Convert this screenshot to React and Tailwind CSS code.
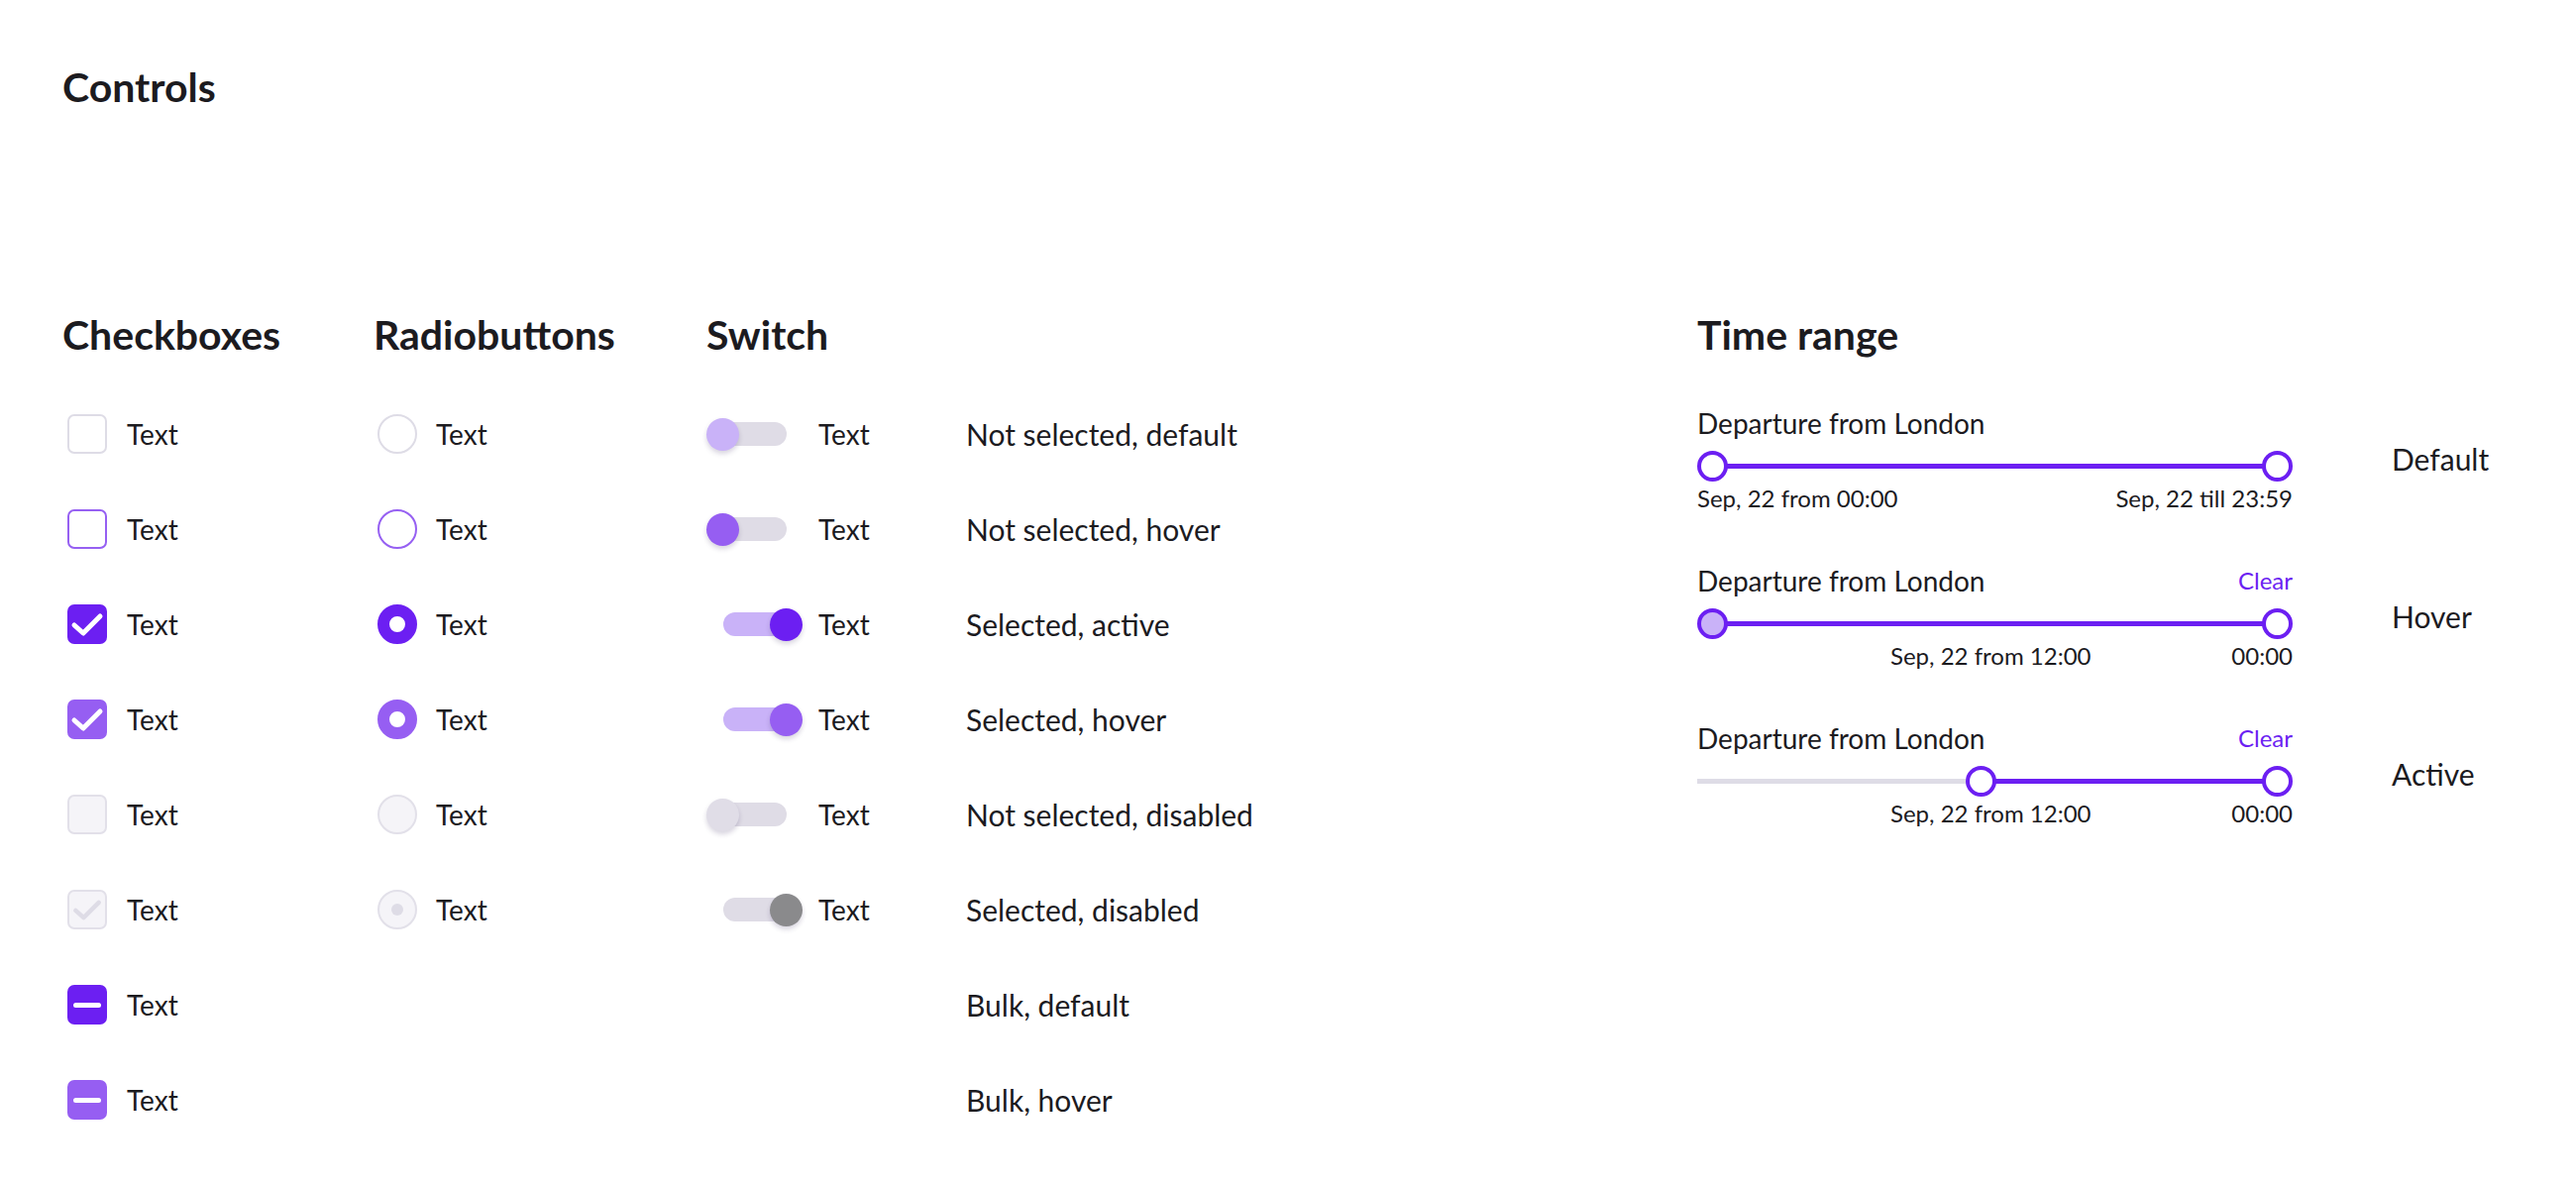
import React from 'react'

const ink = 'text-[#1c1b1f]'
const font = { fontFamily: 'Lato, "Noto Sans", sans-serif' }

function Check({ color }) {
  return (
    <svg width="40" height="40" viewBox="0 0 40 40">
      <polyline points="7,21 16,29 33,12" fill="none" stroke={color} strokeWidth="5" strokeLinecap="round" strokeLinejoin="round" />
    </svg>
  )
}

function Checkbox({ variant }) {
  if (variant === 'default') return <div className="w-10 h-10 rounded-[7px] border-2 border-[#dedce6] bg-white" />
  if (variant === 'hover') return <div className="w-10 h-10 rounded-[7px] border-2 border-[#9660f2] bg-white" />
  if (variant === 'checked') return <div className="w-10 h-10 rounded-[7px] bg-[#6c1ff2]"><Check color="#fff" /></div>
  if (variant === 'checkedHover') return <div className="w-10 h-10 rounded-[7px] bg-[#965ef2]"><Check color="#fff" /></div>
  if (variant === 'disabled') return <div className="w-10 h-10 rounded-[7px] border-2 border-[#e2e0e9] bg-[#f5f4f8]" />
  if (variant === 'checkedDisabled')
    return (
      <div className="w-10 h-10 rounded-[7px] border-2 border-[#e2e0e9] bg-[#f5f4f8] flex items-center justify-center">
        <svg width="36" height="36" viewBox="0 0 40 40">
          <polyline points="7,21 16,29 33,12" fill="none" stroke="#dedce6" strokeWidth="5" strokeLinecap="round" strokeLinejoin="round" />
        </svg>
      </div>
    )
  if (variant === 'bulk')
    return (
      <div className="w-10 h-10 rounded-[7px] bg-[#6c1ff2] flex items-center justify-center">
        <div className="w-[28px] h-[5px] rounded-full bg-white" />
      </div>
    )
  return (
    <div className="w-10 h-10 rounded-[7px] bg-[#965ef2] flex items-center justify-center">
      <div className="w-[28px] h-[5px] rounded-full bg-white" />
    </div>
  )
}

function Radio({ variant }) {
  if (variant === 'default') return <div className="w-10 h-10 rounded-full border-2 border-[#dedce6] bg-white" />
  if (variant === 'hover') return <div className="w-10 h-10 rounded-full border-2 border-[#9660f2] bg-white" />
  if (variant === 'checked') return <div className="w-10 h-10 rounded-full border-[12px] border-[#6c1ff2] bg-white" />
  if (variant === 'checkedHover') return <div className="w-10 h-10 rounded-full border-[12px] border-[#965ef2] bg-white" />
  if (variant === 'disabled') return <div className="w-10 h-10 rounded-full border-2 border-[#e2e0e9] bg-[#f5f4f8]" />
  return (
    <div className="w-10 h-10 rounded-full border-2 border-[#e2e0e9] bg-[#f5f4f8] flex items-center justify-center">
      <div className="w-3 h-3 rounded-full bg-[#dedce6]" />
    </div>
  )
}

function Switch({ on, track, knob }) {
  return (
    <div className="relative w-[97px] h-[34px] flex items-center">
      <div className={`h-[24px] w-[72px] rounded-full ${track} ${on ? 'ml-[17px]' : 'ml-[9px]'}`} />
      <div
        className={`absolute top-[1px] w-[33px] h-[33px] rounded-full shadow-[0_3px_5px_rgba(40,20,80,0.18)] ${knob} ${on ? 'left-[64px]' : 'left-0'}`}
      />
    </div>
  )
}

const checkboxes = ['default', 'hover', 'checked', 'checkedHover', 'disabled', 'checkedDisabled', 'bulk', 'bulkHover']
const radios = ['default', 'hover', 'checked', 'checkedHover', 'disabled', 'checkedDisabled']
const switches = [
  { on: false, track: 'bg-[#dfdce6]', knob: 'bg-[#c9b2f8]' },
  { on: false, track: 'bg-[#dfdce6]', knob: 'bg-[#965ef2]' },
  { on: true, track: 'bg-[#c9b2f8]', knob: 'bg-[#6c1ff2]' },
  { on: true, track: 'bg-[#c9b2f8]', knob: 'bg-[#965ef2]' },
  { on: false, track: 'bg-[#dfdce6]', knob: 'bg-[#e0dde7]' },
  { on: true, track: 'bg-[#dfdce6]', knob: 'bg-[#8a8a8c]' },
]
const states = [
  'Not selected, default',
  'Not selected, hover',
  'Selected, active',
  'Selected, hover',
  'Not selected, disabled',
  'Selected, disabled',
  'Bulk, default',
  'Bulk, hover',
]

function Heading({ children }) {
  return <h2 className={`h-[40px] mb-[32px] flex items-center text-[41px] font-bold ${ink}`}>{children}</h2>
}

function Row({ children, className = '' }) {
  return <div className={`h-[96px] flex items-center ${className}`}>{children}</div>
}

function Handle({ left, fill = 'bg-white' }) {
  return (
    <div
      className={`absolute top-[1px] w-[31px] h-[31px] rounded-full border-[4px] border-[#6c1ff2] ${fill}`}
      style={left === 'end' ? { right: 0 } : { left }}
    />
  )
}

function TimeRange({ mode, label }) {
  return (
    <div className="flex">
      <div className="w-[601px]">
        <div className="h-[30px] flex items-center justify-between">
          <span className={`text-[28px] ${ink}`}>Departure from London</span>
          {mode !== 'default' && <span className="text-[24px] text-[#6c1ff2]">Clear</span>}
        </div>
        <div className="relative h-[32px] mt-[12px]">
          {mode === 'active' ? (
            <>
              <div className="absolute left-0 w-[272px] top-[14px] h-[5px] bg-[#dedce6]" />
              <div className="absolute left-[286px] right-[15px] top-[14px] h-[5px] bg-[#6c1ff2]" />
              <Handle left={271} />
              <Handle left="end" />
            </>
          ) : (
            <>
              <div className="absolute left-[15px] right-[15px] top-[14px] h-[5px] bg-[#6c1ff2]" />
              <Handle left={0} fill={mode === 'hover' ? 'bg-[#c9b2f8]' : 'bg-white'} />
              <Handle left="end" />
            </>
          )}
        </div>
        <div className={`h-[26px] mt-[4px] flex items-center justify-between text-[24px] ${ink} ${mode === 'default' ? '' : 'pl-[195px]'}`}>
          {mode === 'default' ? (
            <>
              <span>Sep, 22 from 00:00</span>
              <span>Sep, 22 till 23:59</span>
            </>
          ) : (
            <>
              <span>Sep, 22 from 12:00</span>
              <span>00:00</span>
            </>
          )}
        </div>
      </div>
      <div className={`ml-[100px] mt-[34px] h-[34px] flex items-center text-[30px] ${ink}`}>{label}</div>
    </div>
  )
}

export default function App() {
  return (
    <div className="w-[2600px] h-[1198px] bg-white pl-[63px] pt-[68px]" style={font}>
      <h1 className={`h-[40px] flex items-center text-[41px] font-bold ${ink}`}>Controls</h1>

      <div className="flex mt-[210px]">
        {/* Checkboxes */}
        <div className="w-[314px]">
          <Heading>Checkboxes</Heading>
          {checkboxes.map((v) => (
            <Row key={v} className="pl-[5px] gap-[20px]">
              <Checkbox variant={v} />
              <span className={`text-[28px] ${ink}`}>Text</span>
            </Row>
          ))}
        </div>

        {/* Radio */}
        <div className="w-[336px]">
          <Heading>Radiobuttons</Heading>
          {radios.map((v) => (
            <Row key={v} className="pl-[4px] gap-[19px]">
              <Radio variant={v} />
              <span className={`text-[28px] ${ink}`}>Text</span>
            </Row>
          ))}
        </div>

        {/* Switch */}
        <div className="w-[262px]">
          <Heading>Switch</Heading>
          {switches.map((s, i) => (
            <Row key={i} className="gap-[16px]">
              <Switch {...s} />
              <span className={`text-[28px] ${ink}`}>Text</span>
            </Row>
          ))}
        </div>

        {/* States */}
        <div className="w-[738px]">
          <div className="h-[40px] mb-[32px]" />
          {states.map((s) => (
            <Row key={s}>
              <span className={`text-[30px] ${ink}`}>{s}</span>
            </Row>
          ))}
        </div>

        {/* Time range */}
        <div>
          <Heading>Time range</Heading>
          <div className="flex flex-col gap-[55px] mt-[54px]">
            <TimeRange mode="default" label="Default" />
            <TimeRange mode="hover" label="Hover" />
            <TimeRange mode="active" label="Active" />
          </div>
        </div>
      </div>
    </div>
  )
}
